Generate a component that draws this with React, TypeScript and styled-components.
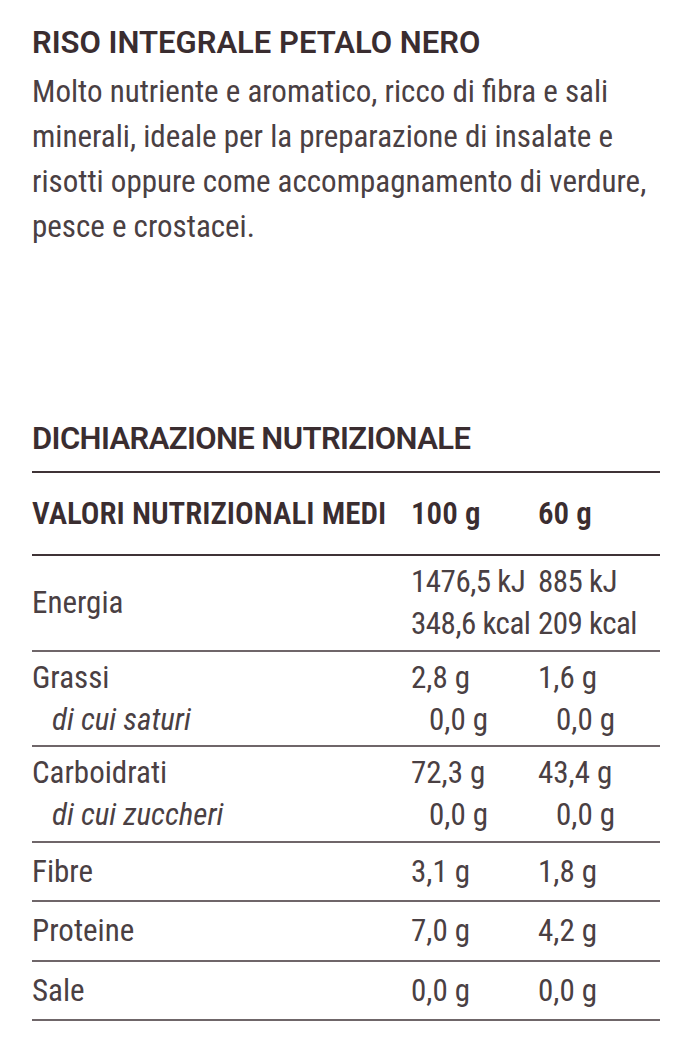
import * as React from "react";
import styled, { createGlobalStyle } from "styled-components";

const GlobalStyle = createGlobalStyle`
  html, body {
    margin: 0;
    padding: 0;
    background: #ffffff;
  }
  body {
    font-family: Roboto, "Liberation Sans", sans-serif;
    font-stretch: condensed;
    color: #4a4043;
  }
`;

const Page = styled.main`
  width: 628px;
  padding: 22px 0 20px 32px;
`;

const Title = styled.h1`
  margin: 0;
  font-size: 31px;
  line-height: 42px;
  font-weight: 600;
  font-stretch: 88%;
  color: #3a2d30;
  text-transform: uppercase;
`;

const Description = styled.p`
  margin: 5px 0 0;
  font-size: 31px;
  line-height: 45px;
  font-weight: 400;
`;

const Section = styled.section`
  margin-top: 169px;
`;

const SectionTitle = styled.h2`
  margin: 0 0 11px;
  font-size: 31px;
  line-height: 42px;
  font-weight: 600;
  font-stretch: 88%;
  letter-spacing: -0.6px;
  color: #3a2d30;
`;

const Table = styled.div`
  display: grid;
  grid-template-columns: 379px 127px 1fr;
  border-bottom: 2px solid #6f6669;
`;

const Row = styled.div<{ $top: number; $bottom: number; $strong?: boolean }>`
  grid-column: 1 / -1;
  display: grid;
  grid-template-columns: subgrid;
  align-items: center;
  padding: ${(p) => p.$top}px 0 ${(p) => p.$bottom}px;
  border-top: 2px solid ${(p) => (p.$strong ? "#3f3336" : "#6f6669")};
`;

const Cell = styled.div<{ $bold?: boolean; $tight?: boolean }>`
  font-size: 31px;
  line-height: 42px;
  font-weight: ${(p) => (p.$bold ? 600 : 400)};
  font-stretch: ${(p) => (p.$bold ? "77%" : "condensed")};
  letter-spacing: ${(p) => (p.$tight ? "-0.5px" : "normal")};
  color: ${(p) => (p.$bold ? "#3a2d30" : "#4a4043")};
  white-space: nowrap;
`;

const Line = styled.span<{ $sub?: boolean }>`
  display: block;
  padding-left: ${(p) => (p.$sub ? 20 : 0)}px;
  font-style: ${(p) => (p.$sub ? "italic" : "normal")};
`;

const Value = styled.span<{ $sub?: boolean }>`
  display: block;
  padding-left: ${(p) => (p.$sub ? 18 : 0)}px;
`;

type Nutrient = {
  name: string;
  per100: string;
  per60: string;
  pad: [number, number];
  sub?: { name: string; per100: string; per60: string };
};

const nutrients: Nutrient[] = [
  {
    name: "Grassi",
    per100: "2,8 g",
    per60: "1,6 g",
    pad: [5, 4],
    sub: { name: "di cui saturi", per100: "0,0 g", per60: "0,0 g" },
  },
  {
    name: "Carboidrati",
    per100: "72,3 g",
    per60: "43,4 g",
    pad: [5, 5],
    sub: { name: "di cui zuccheri", per100: "0,0 g", per60: "0,0 g" },
  },
  { name: "Fibre", per100: "3,1 g", per60: "1,8 g", pad: [8, 7] },
  { name: "Proteine", per100: "7,0 g", per60: "4,2 g", pad: [8, 8] },
  { name: "Sale", per100: "0,0 g", per60: "0,0 g", pad: [8, 7] },
];

export default function App() {
  return (
    <>
      <GlobalStyle />
      <Page>
        <Title>Riso integrale petalo nero</Title>
        <Description>
          Molto nutriente e aromatico, ricco di fibra e sali minerali, ideale per la preparazione di insalate e
          risotti oppure come accompagnamento di verdure, pesce e crostacei.
        </Description>

        <Section>
          <SectionTitle>DICHIARAZIONE NUTRIZIONALE</SectionTitle>
          <Table>
            <Row $top={20} $bottom={19} $strong>
              <Cell $bold>VALORI NUTRIZIONALI MEDI</Cell>
              <Cell $bold>100 g</Cell>
              <Cell $bold>60 g</Cell>
            </Row>
            <Row $top={5} $bottom={5} $strong>
              <Cell>Energia</Cell>
              <Cell $tight>
                <Value>1476,5 kJ</Value>
                <Value>348,6 kcal</Value>
              </Cell>
              <Cell $tight>
                <Value>885 kJ</Value>
                <Value>209 kcal</Value>
              </Cell>
            </Row>
            {nutrients.map((n) => (
              <Row key={n.name} $top={n.pad[0]} $bottom={n.pad[1]}>
                <Cell>
                  <Line>{n.name}</Line>
                  {n.sub && <Line $sub>{n.sub.name}</Line>}
                </Cell>
                <Cell>
                  <Value>{n.per100}</Value>
                  {n.sub && <Value $sub>{n.sub.per100}</Value>}
                </Cell>
                <Cell>
                  <Value>{n.per60}</Value>
                  {n.sub && <Value $sub>{n.sub.per60}</Value>}
                </Cell>
              </Row>
            ))}
          </Table>
        </Section>
      </Page>
    </>
  );
}
